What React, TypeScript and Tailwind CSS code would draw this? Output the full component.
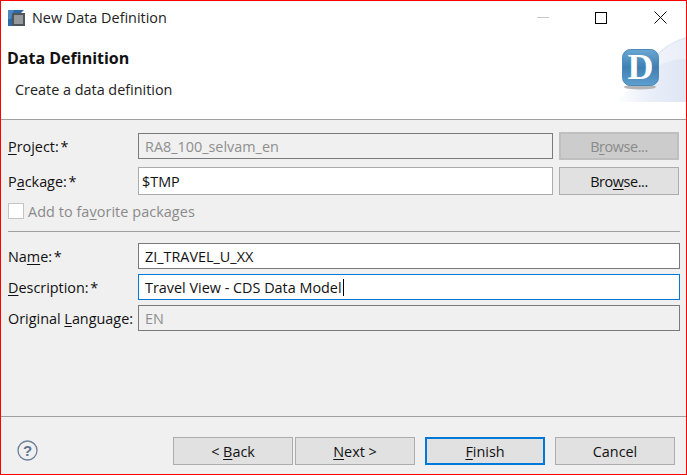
import React from "react";

const U = ({ children }: { children: React.ReactNode }) => <span className="underline underline-offset-2 decoration-1">{children}</span>;

function Btn({ children, variant = "normal", className = "" }: { children: React.ReactNode; variant?: "normal" | "disabled" | "default"; className?: string }) {
  const v =
    variant === "disabled"
      ? "bg-[#cccccc] border-[#bfbfbf] text-[#8a8a8a] border-2"
      : variant === "default"
      ? "bg-[#e1e1e1] border-[#0078d7] text-[#111] border-2"
      : "bg-[#e1e1e1] border-[#adadad] text-[#111] border";
  return (
    <div className={`flex items-center justify-center w-[120px] ${v} ${className}`}>
      <span className="whitespace-pre">{children}</span>
    </div>
  );
}

function Field({ value, kind = "normal", children }: { value: string; kind?: "normal" | "readonly" | "focus"; children?: React.ReactNode }) {
  const v =
    kind === "readonly"
      ? "bg-[#f0f0f0] border-[#7a7a7a] text-[#8f8f8f]"
      : kind === "focus"
      ? "bg-white border-[#0078d7] text-[#111]"
      : "bg-white border-[#7a7a7a] text-[#111]";
  return (
    <div className={`flex-1 h-[26px] border ${v} flex items-center pl-[6px] whitespace-pre`}>
      {value}
      {children}
    </div>
  );
}

function Label({ children, tight = false }: { children: React.ReactNode; tight?: boolean }) {
  return <div className={`w-[130px] shrink-0 text-[#111] whitespace-nowrap ${tight ? "[word-spacing:-2px]" : ""}`}>{children}</div>;
}

function Banner() {
  return (
    <svg width="71" height="65" viewBox="0 0 71 65">
      <defs>
        <linearGradient id="bg" x1="0" y1="0" x2="1" y2="0">
          <stop offset="0" stopColor="#ffffff" />
          <stop offset="0.5" stopColor="#e9eef8" />
          <stop offset="1" stopColor="#dfe6f4" />
        </linearGradient>
        <linearGradient id="lb" x1="0" y1="0" x2="0" y2="1">
          <stop offset="0" stopColor="#6aa6d3" />
          <stop offset="0.5" stopColor="#3f80b2" />
          <stop offset="1" stopColor="#5f9fce" />
        </linearGradient>
      </defs>
      <path d="M0 65 C22 52 30 12 71 0 V65 Z" fill="url(#bg)" />
      <path d="M38 25 C48 12 58 5 71 2 V22 C60 22 48 25 38 32 Z" fill="#ffffff" opacity="0.35" />
      <ellipse cx="25" cy="50" rx="16" ry="2.6" fill="#b5b5b5" />
      <rect x="7.5" y="12.5" width="36" height="36" rx="8" fill="url(#lb)" stroke="#4a8abb" />
      <text x="25.5" y="42" textAnchor="middle" fontFamily="Liberation Serif, serif" fontWeight="700" fontSize="36" fill="#ffffff">D</text>
    </svg>
  );
}

export default function App() {
  return (
    <div className="w-[687px] h-[475px] border border-[#ff0000] bg-[#f0f0f0] flex flex-col overflow-hidden text-[14.4px] leading-[19px]" style={{ fontFamily: '"Open Sans", "Noto Sans", sans-serif' }}>
      <div className="h-[118px] shrink-0 bg-white flex flex-col">
        <div className="h-[33px] flex items-center pl-[7px] text-[#222] shrink-0">
          <svg width="17" height="17" viewBox="0 0 17 17" className="mr-[7px]">
            <path d="M0 1h16L12 5H5v12H0z" fill="#2f6aa5" />
            <path d="M0 1h6L3 10H0z" fill="#4a86c0" />
            <rect x="4" y="4" width="13" height="13" fill="#4f5559" />
            <rect x="6" y="6" width="9" height="9" fill="#96999c" />
          </svg>
          New Data Definition
          <div className="ml-auto flex items-center">
            <div className="w-[46px] flex justify-center"><div className="w-[12px] h-px bg-[#c8c8c8]" /></div>
            <div className="w-[46px] ml-[12px] flex justify-center"><div className="w-[12px] h-[12px] border border-black" /></div>
            <div className="w-[46px] ml-[13px] mr-[3px] flex justify-center">
              <svg width="13" height="13" viewBox="0 0 13 13"><path d="M0.5 0.5L12.5 12.5M12.5 0.5L0.5 12.5" stroke="#111" strokeWidth="1" /></svg>
            </div>
          </div>
        </div>
        <div className="flex-1 flex relative">
          <div className="flex-1 pl-[6px] pt-[13px]">
            <div className="font-bold text-[16px] leading-[22px] text-[#111]">Data Definition</div>
            <div className="pl-[8px] pt-[11px] text-[#222]">Create a data definition</div>
          </div>
          <div className="absolute right-0 top-[3px]"><Banner /></div>
        </div>
      </div>
      <div className="h-px bg-[#a0a0a0] shrink-0" />
      <div className="flex-1 px-[7px] pt-[12px] flex flex-col">
        <div className="flex items-center h-[28px]">
          <Label tight><U>P</U>roject: *</Label>
          <Field value="RA8_100_selvam_en" kind="readonly" />
          <Btn variant="disabled" className="h-[28px] ml-[6px] tracking-[-0.4px]">B<U>r</U>owse...</Btn>
        </div>
        <div className="flex items-center h-[28px] mt-[7px]">
          <Label tight>P<U>a</U>ckage: *</Label>
          <div className="flex-1 h-[28px] border border-[#ababab] bg-white flex items-center pl-[3px] text-[#111]">$TMP</div>
          <Btn className="h-[28px] ml-[6px] tracking-[-0.4px]">Bro<U>w</U>se...</Btn>
        </div>
        <div className="flex items-center mt-[7px] h-[18px] text-[#8a8a8a] tracking-[0.07px]">
          <div className="w-[16px] h-[16px] border border-[#c4c4c4] bg-white mr-[4px]" />
          <span>Add to fa<U>v</U>orite packages</span>
        </div>
        <div className="h-px bg-[#a0a0a0] mt-[11px] mr-[-1px]" />
        <div className="flex items-center mt-[11px] mr-[-1px]">
          <Label tight>Na<U>m</U>e: *</Label>
          <Field value="ZI_TRAVEL_U_XX" />
        </div>
        <div className="flex items-center mt-[5px] mr-[-1px]">
          <Label tight><U>D</U>escription: *</Label>
          <Field value="Travel View - CDS Data Model" kind="focus"><span className="inline-block w-px h-[17px] ml-[1px] bg-black" /></Field>
        </div>
        <div className="flex items-center mt-[5px] mr-[-1px]">
          <Label>Original <U>L</U>anguage:</Label>
          <Field value="EN" kind="readonly" />
        </div>
      </div>
      <div className="h-px bg-[#a0a0a0] shrink-0" />
      <div className="h-[57px] shrink-0 flex items-center pl-[16px] pr-[11px] pt-[10px] text-[#111]">
        <svg width="21" height="21" viewBox="0 0 21 21">
          <circle cx="10.5" cy="10.5" r="9.5" fill="none" stroke="#6d7f99" strokeWidth="1.3" />
          <text x="10.5" y="16" textAnchor="middle" fontFamily="Liberation Sans, sans-serif" fontWeight="700" fontSize="15" fill="#5f7290">?</text>
        </svg>
        <div className="ml-auto flex">
          <Btn className="h-[28px] pt-px">&lt; <U>B</U>ack</Btn>
          <Btn className="h-[28px] ml-[2px] pt-px"><U>N</U>ext &gt;</Btn>
          <Btn variant="default" className="h-[28px] ml-[10px] pt-px"><U>F</U>inish</Btn>
          <Btn className="h-[28px] ml-[10px] pt-px">Cancel</Btn>
        </div>
      </div>
    </div>
  );
}
